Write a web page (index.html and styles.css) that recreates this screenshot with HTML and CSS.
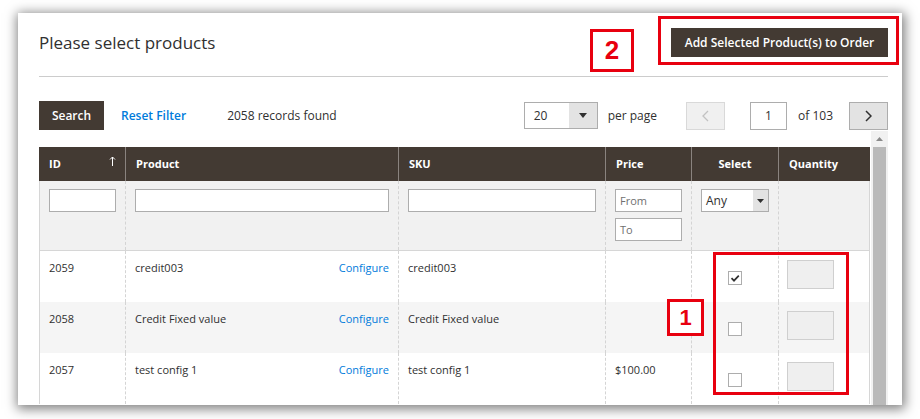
FILE: index.html
```html
<!DOCTYPE html>
<html lang="en">
<head>
<meta charset="utf-8">
<title>Please select products</title>
<link rel="stylesheet" href="styles.css">
</head>
<body>
<div class="panel">
  <div class="head">
    <h1 class="title">Please select products</h1>
    <button class="btn btn-add">Add Selected Product(s) to Order</button>
  </div>
  <div class="divider"></div>
  <div class="toolbar">
    <button class="btn btn-search">Search</button>
    <span class="reset">Reset Filter</span>
    <span class="found">2058 records found</span>
    <div class="pp-select">
      <span class="pp-value">20</span>
      <span class="pp-arrow"><svg width="8" height="5" viewBox="0 0 8 5"><path d="M0 0h8L4 5z" fill="#303030"/></svg></span>
    </div>
    <span class="pp-label">per page</span>
    <span class="pager-btn prev"><svg width="7" height="12" viewBox="0 0 7 12"><path d="M6 1L1 6l5 5" fill="none" stroke="#c2c2c2" stroke-width="1.3"/></svg></span>
    <span class="page-input">1</span>
    <span class="of">of 103</span>
    <span class="pager-btn next"><svg width="7" height="12" viewBox="0 0 7 12"><path d="M1 1l5 5-5 5" fill="none" stroke="#303030" stroke-width="1.5"/></svg></span>
  </div>
  <div class="gridwrap">
    <div class="grid">
      <div class="thead">
        <div class="th th-id"><span>ID</span><svg width="7" height="10" viewBox="0 0 7 10"><path d="M3.5 1v9M1 3.5l2.5-2.5 2.5 2.5" fill="none" stroke="#fff" stroke-width="1"/></svg></div>
        <div class="th">Product</div>
        <div class="th">SKU</div>
        <div class="th">Price</div>
        <div class="th th-center">Select</div>
        <div class="th">Quantity</div>
      </div>
      <div class="tbody">
        <div class="trow filters">
          <div class="td"><span class="inp"></span></div>
          <div class="td"><span class="inp"></span></div>
          <div class="td"><span class="inp"></span></div>
          <div class="td price-filter"><span class="inp ph">From</span><span class="inp ph">To</span></div>
          <div class="td"><span class="sel"><span class="sel-val">Any</span><span class="sel-arrow"><svg width="7" height="4" viewBox="0 0 7 4"><path d="M0 0h7L3.5 4z" fill="#303030"/></svg></span></span></div>
          <div class="td"></div>
        </div>
        <div class="trow">
          <div class="td">2059</div>
          <div class="td prod"><span>credit003</span><span class="link">Configure</span></div>
          <div class="td">credit003</div>
          <div class="td"></div>
          <div class="td cb-cell"><span class="cb"><svg width="12" height="12" viewBox="0 0 12 12"><path d="M2.5 6.2l2.5 2.5 4.8-5" fill="none" stroke="#303030" stroke-width="1.7"/></svg></span></div>
          <div class="td qty-cell"><span class="qty"></span></div>
        </div>
        <div class="trow alt">
          <div class="td">2058</div>
          <div class="td prod"><span>Credit Fixed value</span><span class="link">Configure</span></div>
          <div class="td">Credit Fixed value</div>
          <div class="td"></div>
          <div class="td cb-cell"><span class="cb"></span></div>
          <div class="td qty-cell"><span class="qty"></span></div>
        </div>
        <div class="trow">
          <div class="td">2057</div>
          <div class="td prod"><span>test config 1</span><span class="link">Configure</span></div>
          <div class="td">test config 1</div>
          <div class="td">$100.00</div>
          <div class="td cb-cell"><span class="cb"></span></div>
          <div class="td qty-cell"><span class="qty"></span></div>
        </div>
      </div>
    </div>
    <div class="scrollbar">
      <div class="sb-up"><svg width="7" height="4" viewBox="0 0 7 4"><path d="M0 4h7L3.5 0z" fill="#8a8a8a"/></svg></div>
      <div class="sb-thumb"></div>
    </div>
  </div>
  <div class="outline outline-add"></div>
  <div class="mark mark-2">2</div>
  <div class="outline outline-sel"></div>
  <div class="mark mark-1">1</div>
</div>
</body>
</html>
```

FILE: styles.css
```css
* { box-sizing: border-box; }
html, body { margin: 0; padding: 0; background: #fff; }
body {
  font-family: "Open Sans", "Liberation Sans", sans-serif;
  color: #303030;
  height: 419px;
  overflow: hidden;
}
.panel {
  position: relative;
  margin: 13px 0 0 18px;
  width: 884px;
  height: 392px;
  background: #fff;
  box-shadow: 1px 2px 11px 2px rgba(0, 0, 0, 0.5);
  overflow: hidden;
  padding: 15px 14px 0 21px;
}
.head {
  display: flex;
  justify-content: space-between;
  align-items: center;
  height: 29px;
}
.title {
  margin: 0;
  font-size: 17px;
  font-weight: 400;
  line-height: 24px;
  color: #303030;
}
.btn {
  border: 0;
  font-family: inherit;
  font-weight: 600;
  font-size: 12px;
  color: #fff;
  background: #433a33;
  height: 29px;
  padding: 0;
  line-height: 29px;
  text-align: center;
}
.btn-add { width: 217px; }
.divider { margin-top: 19px; height: 1px; background: #cccccc; }
.toolbar {
  display: flex;
  align-items: center;
  margin-top: 24px;
  height: 29px;
  font-size: 12px;
}
.btn-search { width: 65px; }
.reset { margin-left: 17px; color: #007bdb; font-weight: 600; }
.found { margin-left: 41px; }
.pp-select {
  margin-left: auto;
  display: flex;
  width: 74px;
  height: 27px;
  border: 1px solid #adadad;
  background: #fff;
}
.pp-value { flex: 1; padding-left: 9px; line-height: 25px; }
.pp-arrow {
  width: 28px;
  background: #e3e3e3;
  display: flex;
  align-items: center;
  justify-content: center;
}
.pp-label { margin-left: 10px; }
.pager-btn {
  width: 39px;
  height: 28px;
  display: flex;
  align-items: center;
  justify-content: center;
  border: 1px solid #adadad;
  background: #e3e3e3;
}
.pager-btn.prev { margin-left: 29px; background: #f0f0f0; border-color: #d9d9d9; }
.page-input {
  margin-left: 25px;
  width: 37px;
  height: 28px;
  border: 1px solid #adadad;
  text-align: center;
  line-height: 26px;
}
.of { margin-left: 11px; }
.pager-btn.next { margin-left: 16px; }

.gridwrap { display: flex; margin-top: 1px; }
.grid { width: 831px; padding-top: 16px; }
.thead {
  display: grid;
  grid-template-columns: 86px 273px 207px 86px 87px 92px;
  height: 34px;
  background: #433a33;
}
.th {
  color: #fff;
  font-size: 11px;
  font-weight: 700;
  line-height: 34px;
  padding: 0 9px 0 10px;
  border-left: 1px solid #8a837f;
}
.th-id {
  border-left: 0;
  display: flex;
  justify-content: space-between;
  align-items: center;
}
.th-id svg { margin-top: -6px; }
.th-center { text-align: center; padding: 0; }
.tbody {
  border-left: 1px solid #d6d6d6;
  border-right: 1px solid #d6d6d6;
  font-size: 11px;
  line-height: 16px;
}
.trow {
  display: grid;
  grid-template-columns: 85px 273px 207px 86px 87px 91px;
  height: 51px;
  background: #fff;
}
.trow.alt { background: #f5f5f5; }
.trow.filters {
  height: 70px;
  background: #f1f1f1;
  border-bottom: 1px solid #d6d6d6;
}
.td {
  padding: 9px 9px 0 9px;
  border-left: 1px dashed #d4d4d4;
}
.td:first-child { border-left: 0; }
.filters .td { padding: 8px 9px 0 9px; }
.inp {
  display: block;
  height: 23px;
  border: 1px solid #adadad;
  background: #fff;
  padding-left: 4px;
  line-height: 21px;
  font-size: 11px;
}
.inp.ph { color: #707070; }
.price-filter .inp + .inp { margin-top: 6px; }
.sel {
  display: flex;
  height: 23px;
  border: 1px solid #adadad;
  background: #fff;
}
.sel-val { flex: 1; padding-left: 4px; line-height: 21px; font-size: 12px; }
.sel-arrow {
  width: 15px;
  background: #e3e3e3;
  display: flex;
  align-items: center;
  justify-content: center;
}
.prod { display: flex; justify-content: space-between; }
.link { color: #007bdb; }
.cb-cell { display: flex; justify-content: center; align-items: flex-start; padding: 20px 0 0 0; }
.cb {
  width: 14px;
  height: 14px;
  border: 1px solid #adadad;
  background: #fff;
  display: flex;
  align-items: center;
  justify-content: center;
}
.qty-cell { padding: 9px 0 0 8px; }
.qty {
  display: block;
  width: 47px;
  height: 29px;
  border: 1px solid #cfcfcf;
  background: #efefef;
}
.scrollbar {
  margin-left: 1px;
  width: 17px;
  height: 280px;
  background: #f1f1f1;
  display: flex;
  flex-direction: column;
}
.sb-up {
  height: 16px;
  display: flex;
  align-items: center;
  justify-content: center;
}
.sb-thumb { flex: 1; margin: 0 2px; background: #b9b9b9; }

.outline {
  position: absolute;
  border: 3px solid #e8000f;
}
.outline-add { left: 640px; top: 3px; width: 241px; height: 49px; }
.outline-sel { left: 695px; top: 239px; width: 136px; height: 143px; }
.mark {
  position: absolute;
  border: 3px solid #e8000f;
  background: #fff;
  color: #e8000f;
  font-family: "Liberation Sans", Arial, sans-serif;
  font-weight: 700;
  display: flex;
  align-items: center;
  justify-content: center;
}
.mark-2 { left: 572px; top: 16px; width: 44px; height: 43px; font-size: 26px; }
.mark-1 { left: 649px; top: 286px; width: 37px; height: 37px; font-size: 22px; }
```
